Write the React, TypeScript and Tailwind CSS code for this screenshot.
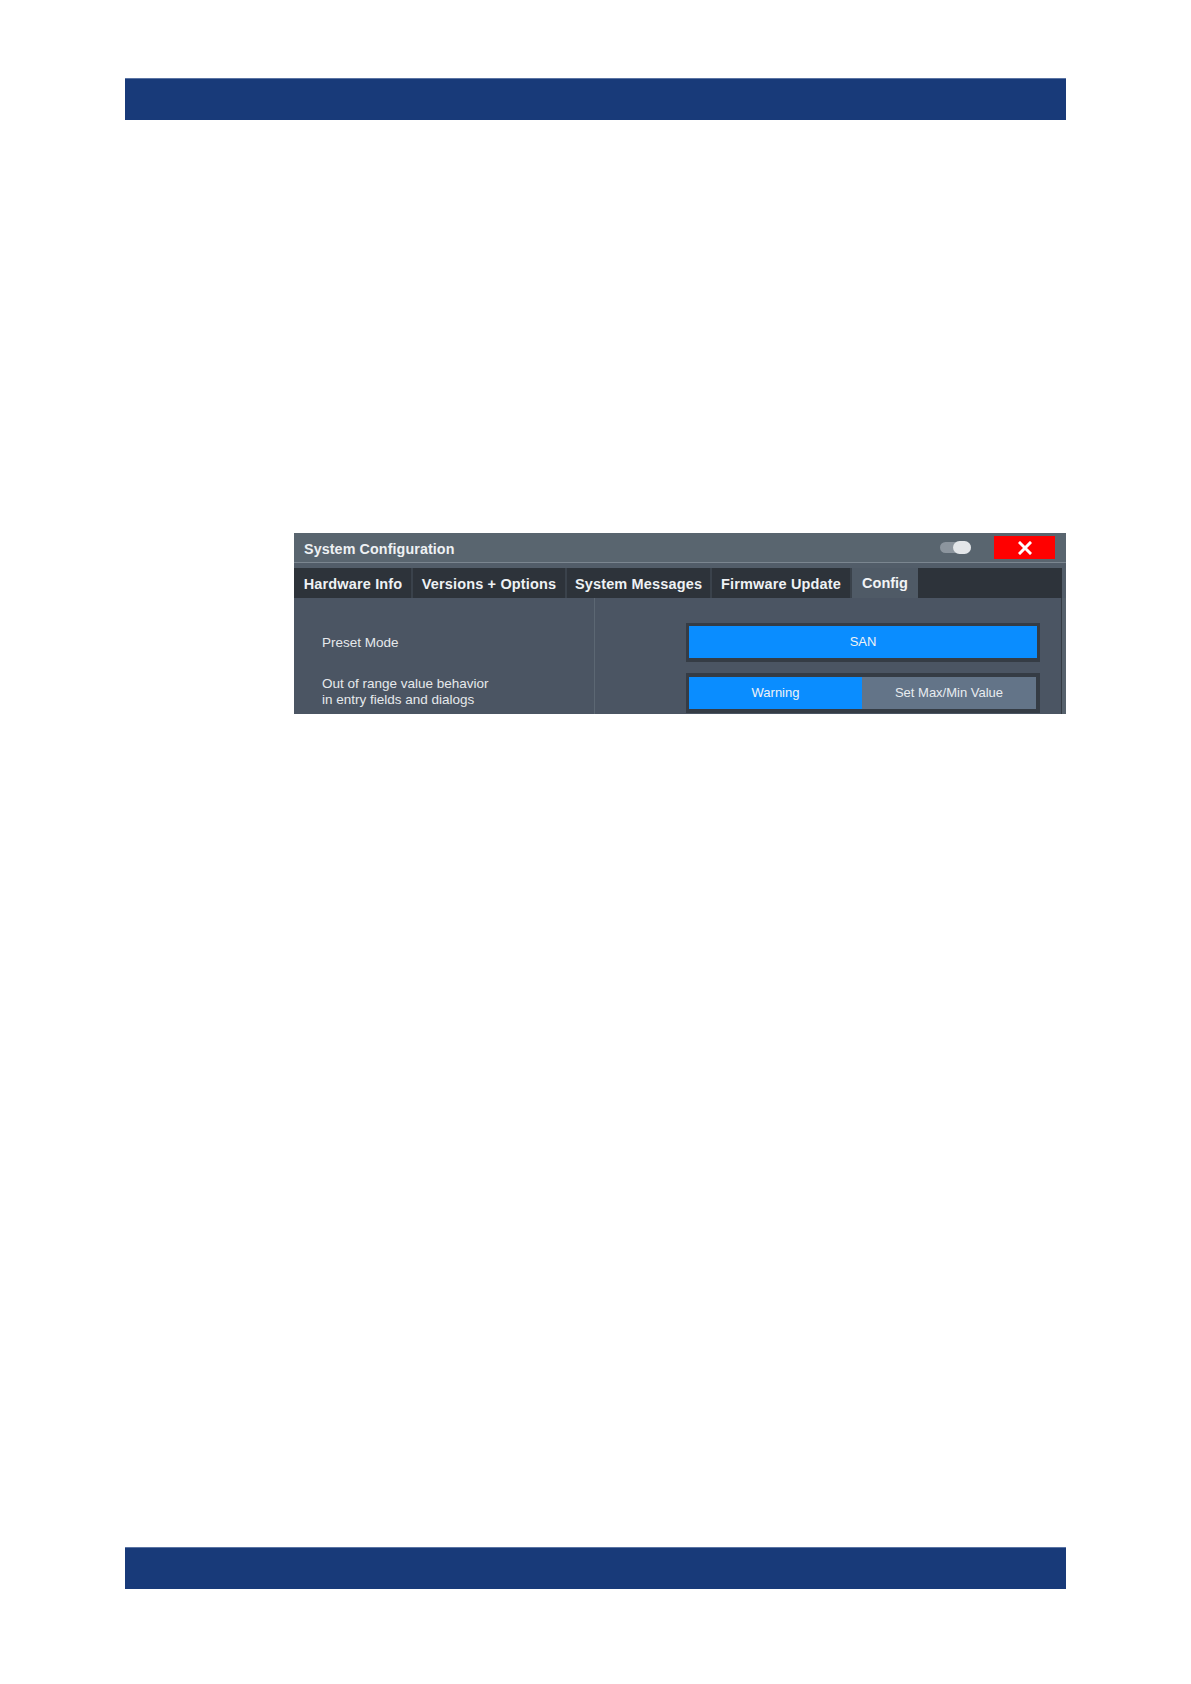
import React from "react";

const tabs = [
  { label: "Hardware Info", w: "w-[118px]" },
  { label: "Versions + Options", w: "w-[154px]" },
  { label: "System Messages", w: "w-[145px]" },
  { label: "Firmware Update", w: "w-[140px]" },
];

export default function App() {
  return (
    <div
      className="w-[1191px] h-[1684px] bg-white flex flex-col"
      style={{ fontFamily: '"Liberation Sans", Arial, sans-serif' }}
    >
      {/* header bar */}
      <div className="mt-[78px] ml-[125px] w-[941px] h-[42px] bg-[#183a79] border-t border-[#5b74a3]" />

      {/* dialog */}
      <div className="mt-[413px] ml-[294px] w-[772px] h-[181px] flex flex-col bg-[#525d69] overflow-hidden">
        {/* title bar */}
        <div className="h-[30px] flex items-center bg-[#59656f] border-b border-[#7b8690] pl-[10px] pr-[11px]">
          <span className="pt-[4px] text-[14.3px] font-bold text-[#eef1f4] tracking-[0.1px]">
            System Configuration
          </span>
          <div className="ml-auto flex items-center">
            <div className="relative w-[31px] h-[11px] rounded-full bg-[#8c959e]">
              <div className="absolute right-0 top-[-1px] w-[18px] h-[13px] rounded-full bg-[#e3e6e9]" />
            </div>
            <div className="ml-[23px] w-[61px] h-[23px] bg-[#ff0000] flex items-center justify-center">
              <svg width="14" height="14" viewBox="0 0 14 14">
                <path d="M2 2 L12 12 M12 2 L2 12" stroke="#ffffff" strokeWidth="3" strokeLinecap="square" />
              </svg>
            </div>
          </div>
        </div>

        {/* tab strip */}
        <div className="pt-[5px] pr-[4px] bg-[#525d69]">
          <div className="h-[30px] flex bg-[#2d333a]">
            <div className="w-[1px] bg-[#2d333a]" />
            {tabs.map((t) => (
              <div
                key={t.label}
                className={`${t.w} h-full flex items-center justify-center border-r-2 border-[#3a424b] pt-[4px] text-[14.5px] font-bold text-[#eef1f4] tracking-[0.15px]`}
              >
                {t.label}
              </div>
            ))}
            <div className="w-[66px] h-full flex items-center justify-center bg-[#4f5a66] text-[14.5px] font-bold text-[#f2f4f6] pt-[1px]">
              Config
            </div>
          </div>
        </div>

        {/* content */}
        <div className="flex-1 flex bg-[#4b5563] border-r-4 border-[#56616c]">
          <div className="w-[301px] border-r border-[#5c6773] pt-[26px] pl-[28px] text-[13.5px] text-[#e6e9ec]">
            <div className="h-[39px] flex items-center">Preset Mode</div>
            <div className="mt-[11px] h-[40px] flex flex-col justify-center leading-[16px] pb-[4px]">
              <span>Out of range value behavior</span>
              <span>in entry fields and dialogs</span>
            </div>
          </div>
          <div className="flex-1 pt-[25px] pl-[91px] pr-[21px] border-r border-[#343b43] text-[13px] text-[#f0f3f6]">
            <div className="h-[39px] bg-[#353c45] p-[3px] pb-[4px] pl-[3px]">
              <div className="h-full bg-[#0a8dff] flex items-center justify-center">SAN</div>
            </div>
            <div className="mt-[11px] h-[40px] bg-[#353c45] p-[4px] pl-[3px]">
              <div className="h-full flex">
                <div className="w-[173px] bg-[#0a8dff] flex items-center justify-center">Warning</div>
                <div className="flex-1 bg-[#637488] flex items-center justify-center text-[#e8ecf0]">
                  Set Max/Min Value
                </div>
              </div>
            </div>
          </div>
        </div>
      </div>

      {/* footer bar */}
      <div className="mt-[833px] ml-[125px] w-[941px] h-[42px] bg-[#183a79] border-t border-[#5b74a3]" />
    </div>
  );
}
